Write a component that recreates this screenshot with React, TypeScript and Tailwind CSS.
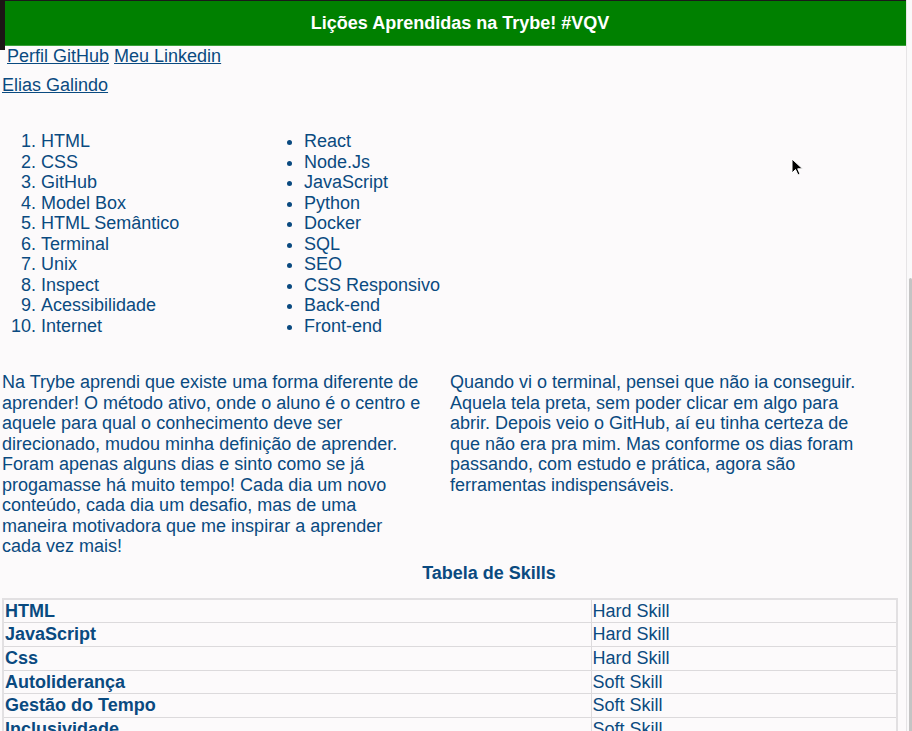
const hard = ["HTML", "CSS", "GitHub", "Model Box", "HTML Semântico", "Terminal", "Unix", "Inspect", "Acessibilidade", "Internet"];
const extra = ["React", "Node.Js", "JavaScript", "Python", "Docker", "SQL", "SEO", "CSS Responsivo", "Back-end", "Front-end"];

const skills: [string, string][] = [
  ["HTML", "Hard Skill"],
  ["JavaScript", "Hard Skill"],
  ["Css", "Hard Skill"],
  ["Autoliderança", "Soft Skill"],
  ["Gestão do Tempo", "Soft Skill"],
  ["Inclusividade", "Soft Skill"],
];

const Cursor = () => (
  <svg className="absolute left-[791px] top-[158px] pointer-events-none" width="13" height="19" viewBox="0 0 13 19">
    <path d="M1 1 L1 15 L4.5 11.5 L7 17 L9 16 L6.7 10.8 L11.5 10.8 Z" fill="#000" stroke="#fff" strokeWidth="1" strokeLinejoin="round" />
  </svg>
);

export default function App() {
  return (
    <div className="relative flex h-[731px] overflow-hidden bg-[#fcfafb] text-[18px] text-[#0a4a80] font-['Liberation_Sans',Arial,sans-serif]">
      <div className="w-[906px] shrink-0">
        {/* header */}
        <header className="h-[46px] bg-[#008000] border-t border-[#1a1a1a] border-b border-b-[#3aa03a] flex items-center justify-center pl-[14px]">
          <h1 className="text-white font-bold text-[18px]">Lições Aprendidas na Trybe! #VQV</h1>
        </header>

        <nav className="pl-[7px] leading-[20.7px]">
          <a href="#" className="underline">Perfil GitHub</a>{" "}
          <a href="#" className="underline">Meu Linkedin</a>
        </nav>
        <p className="pl-[2px] mt-[8px] leading-[20.7px]">
          <a href="#" className="underline">Elias Galindo</a>
        </p>

        {/* lists */}
        <div className="flex mt-[36px] leading-[20.5px]">
          <ol className="list-decimal pl-[41px] w-[264px]">
            {hard.map((t) => (
              <li key={t}>{t}</li>
            ))}
          </ol>
          <ul className="list-disc pl-[40px]">
            {extra.map((t) => (
              <li key={t}>{t}</li>
            ))}
          </ul>
        </div>

        {/* texts */}
        <div className="flex mt-[36px] pl-[2px] gap-[26px] leading-[20.5px]">
          <p className="w-[422px]">
            Na Trybe aprendi que existe uma forma diferente de aprender! O método ativo, onde o aluno é o centro e aquele
            para qual o conhecimento deve ser direcionado, mudou minha definição de aprender. Foram apenas alguns dias e
            sinto como se já progamasse há muito tempo! Cada dia um novo conteúdo, cada dia um desafio, mas de uma maneira
            motivadora que me inspirar a aprender cada vez mais!
          </p>
          <p className="w-[422px]">
            Quando vi o terminal, pensei que não ia conseguir. Aquela tela preta, sem poder clicar em algo para abrir.
            Depois veio o GitHub, aí eu tinha certeza de que não era pra mim. Mas conforme os dias foram passando, com
            estudo e prática, agora são ferramentas indispensáveis.
          </p>
        </div>

        {/* table */}
        <h2 className="mt-[6px] pl-[72px] text-center font-bold text-[18px] leading-[20.7px]">Tabela de Skills</h2>
        <table className="ml-[2px] mt-[14px] w-[896px] border-collapse border-2 border-[#e2e0e2]">
          <tbody>
            {skills.map(([s, k]) => (
              <tr key={s} className="leading-[20.7px]">
                <td className="w-[588px] border border-[#dcdadc] px-[1px] py-[1px] font-bold">{s}</td>
                <td className="border border-[#dcdadc] px-[1px] py-[1px]">{k}</td>
              </tr>
            ))}
          </tbody>
        </table>
      </div>

      {/* scrollbar */}
      <div className="flex-1 border-l border-[#e6e4e6] bg-[#faf9fa] flex justify-end">
        <div className="w-[3px] mt-[278px] bg-[#c4c4c4] rounded-t-sm" />
      </div>

      <div className="absolute left-0 top-0 w-[5px] h-[50px] bg-[#1c1515]" />
      <Cursor />
    </div>
  );
}
